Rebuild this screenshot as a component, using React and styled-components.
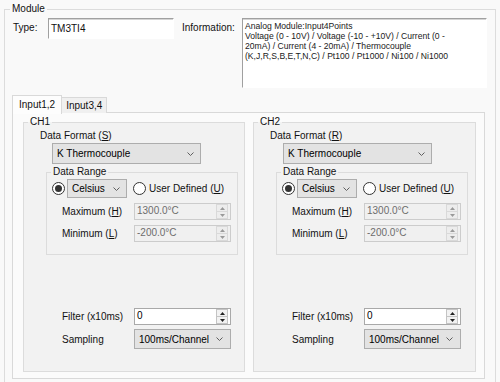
import React from 'react';
import styled, { createGlobalStyle } from 'styled-components';

const Global = createGlobalStyle`
  html, body { margin: 0; padding: 0; background: #f9f9f9; }
  body {
    font-family: "Liberation Sans", Arial, sans-serif;
    font-size: 10px;
    color: #111;
  }
  #root { width: 500px; height: 382px; overflow: hidden; }
`;

const Page = styled.div`
  box-sizing: border-box;
  width: 500px;
  height: 382px;
  padding: 3px 4px 0 4px;
  overflow: hidden;
`;

const Group = styled.fieldset`
  box-sizing: border-box;
  margin: 0;
  min-width: 0;
  padding: 0;
  border: 1px solid #dcdcdc;
  background: ${(p) => p.$bg || 'transparent'};
  height: ${(p) => p.$h}px;
  width: ${(p) => (p.$w ? `${p.$w}px` : 'auto')};
`;

const RangeGroup = styled(Group)`
  margin: 2px 0 0 22px;
`;

const Legend = styled.legend`
  padding: 0 2px;
  margin-left: ${(p) => p.$offset}px;
  line-height: 12px;
  font-size: 10px;
  color: #111;
`;

const Header = styled.div`
  display: flex;
  align-items: flex-start;
  margin: 3px 0 0 8px;
`;

const Caption = styled.span`
  width: ${(p) => p.$w}px;
  margin-left: ${(p) => p.$ml || 0}px;
  padding-top: 3px;
  line-height: 14px;
  flex: none;
`;

const TypeBox = styled.div`
  box-sizing: border-box;
  width: 126px;
  height: 21px;
  padding: 3px 0 0 2px;
  line-height: 14px;
  background: #fff;
  border: 1px solid;
  border-color: #a0a0a0 #ffffff #ffffff #a0a0a0;
  box-shadow: inset 0 1px 0 #d4d4d4;
  flex: none;
`;

const InfoBox = styled.div`
  box-sizing: border-box;
  width: 245px;
  height: 70px;
  padding: 2px 0 0 2px;
  font-size: 8.6px;
  line-height: 10px;
  color: #1a1a1a;
  background: #fff;
  border: 1px solid;
  border-color: #a0a0a0 #ffffff #ffffff #a0a0a0;
  box-shadow: inset 0 1px 0 #d4d4d4;
  flex: none;
`;

const TabStrip = styled.div`
  display: flex;
  align-items: flex-end;
  margin: 6px 0 0 7px;
  height: 19px;
`;

const Tab = styled.div`
  box-sizing: border-box;
  position: relative;
  z-index: ${(p) => (p.$active ? 2 : 1)};
  height: ${(p) => (p.$active ? 19 : 16)}px;
  margin-bottom: ${(p) => (p.$active ? -1 : 0)}px;
  margin-left: ${(p) => (p.$active ? 0 : -1)}px;
  padding: ${(p) => (p.$active ? '2px 6px 0 6px' : '1px 4px 0 4px')};
  line-height: 13px;
  background: ${(p) => (p.$active ? '#fdfdfd' : '#f0f0f0')};
  border: 1px solid #d9d9d9;
  border-bottom: none;
`;

const TabPanel = styled.div`
  box-sizing: border-box;
  width: 473px;
  height: 267px;
  margin: -1px 0 0 7px;
  padding: 3px 8px 0 10px;
  background: #fbfbfb;
  border: 1px solid #d9d9d9;
  display: grid;
  grid-template-columns: 222px 223px;
  column-gap: 8px;
  align-items: start;
`;

const FormatLabel = styled.div`
  margin: 1px 0 0 16px;
  line-height: 14px;
`;

const ComboBox = styled.div`
  box-sizing: border-box;
  display: flex;
  align-items: center;
  justify-content: space-between;
  width: ${(p) => p.$w}px;
  height: ${(p) => p.$h}px;
  margin-left: ${(p) => p.$ml || 0}px;
  padding: 0 ${(p) => p.$pr || 6}px 0 4px;
  background: #e3e3e3;
  border: 1px solid #adadad;
  color: #000;
  flex: none;
`;

const RadioRow = styled.div`
  display: flex;
  align-items: center;
  height: 19px;
  margin: 1px 0 0 5px;
`;

const Radio = styled.span`
  box-sizing: border-box;
  flex: none;
  width: 13px;
  height: 13px;
  border-radius: 50%;
  border: 1px solid #333;
  background: #fff;
  display: flex;
  align-items: center;
  justify-content: center;
  margin: 0 ${(p) => p.$mr}px 0 ${(p) => p.$ml || 0}px;
  &::after {
    content: '';
    width: 7px;
    height: 7px;
    border-radius: 50%;
    background: ${(p) => (p.$checked ? '#333' : 'transparent')};
  }
`;

const FieldRow = styled.div`
  display: flex;
  align-items: center;
  margin: ${(p) => p.$mt}px 0 0 ${(p) => p.$ml}px;
`;

const FieldLabel = styled.span`
  width: 72px;
  flex: none;
`;

const SpinBox = styled.div`
  box-sizing: border-box;
  display: flex;
  width: 97px;
  height: 17px;
  border: 1px solid ${(p) => (p.$disabled ? '#cccccc' : '#a9a9a9')};
  background: ${(p) => (p.$disabled ? '#f0f0f0' : '#ffffff')};
  color: ${(p) => (p.$disabled ? '#6d6d6d' : '#000')};
`;

const SpinValue = styled.span`
  flex: 1;
  padding-left: 2px;
  line-height: 13px;
`;

const SpinButtons = styled.div`
  display: flex;
  flex-direction: column;
  width: 12px;
  margin: 0 2px 0 0;
`;

const SpinButton = styled.div`
  flex: 1;
  display: flex;
  align-items: center;
  justify-content: center;
  background: ${(p) => (p.$disabled ? '#ededed' : '#f2f2f2')};
  border: 1px solid ${(p) => (p.$disabled ? '#d9d9d9' : '#c4c4c4')};
  & + & { border-top: none; }
`;

const Chevron = () => (
  <svg width="7" height="4" viewBox="0 0 7 4">
    <polyline points="0.5,0.5 3.5,3.5 6.5,0.5" fill="none" stroke="#5f5f5f" strokeWidth="1" />
  </svg>
);

const Arrow = ({ up, color }) => (
  <svg width="5" height="3" viewBox="0 0 5 3">
    <polygon points={up ? '0,3 5,3 2.5,0' : '0,0 5,0 2.5,3'} fill={color} />
  </svg>
);

function Spin({ value, disabled }) {
  const c = disabled ? '#9a9a9a' : '#222';
  return (
    <SpinBox $disabled={disabled}>
      <SpinValue>{value}</SpinValue>
      <SpinButtons>
        <SpinButton $disabled={disabled}><Arrow up color={c} /></SpinButton>
        <SpinButton $disabled={disabled}><Arrow color={c} /></SpinButton>
      </SpinButtons>
    </SpinBox>
  );
}

function Channel({ name, formatKey, comboOffset }) {
  return (
    <Group $bg="#f2f2f2" $h={256}>
      <Legend $offset={4}>{name}</Legend>
      <FormatLabel>Data Format (<u>{formatKey}</u>)</FormatLabel>
      <ComboBox $w={149} $h={21} $ml={comboOffset}>K Thermocouple<Chevron /></ComboBox>
      <RangeGroup $bg="#f2f2f2" $h={89} $w={192}>
        <Legend $offset={4}>Data Range</Legend>
        <RadioRow>
          <Radio $checked $mr={2} />
          <ComboBox $w={60} $h={19} $pr={6}>Celsius<Chevron /></ComboBox>
          <Radio $ml={6} $mr={3} />
          <span>User Defined (<u>U</u>)</span>
        </RadioRow>
        <FieldRow $mt={5} $ml={15}>
          <FieldLabel>Maximum (<u>H</u>)</FieldLabel>
          <Spin value="1300.0°C" disabled />
        </FieldRow>
        <FieldRow $mt={5} $ml={15}>
          <FieldLabel>Minimum (<u>L</u>)</FieldLabel>
          <Spin value="-200.0°C" disabled />
        </FieldRow>
      </RangeGroup>
      <FieldRow $mt={53} $ml={38}>
        <FieldLabel>Filter (x10ms)</FieldLabel>
        <Spin value="0" />
      </FieldRow>
      <FieldRow $mt={4} $ml={38}>
        <FieldLabel>Sampling</FieldLabel>
        <ComboBox $w={97} $h={20} $pr={7}>100ms/Channel<Chevron /></ComboBox>
      </FieldRow>
    </Group>
  );
}

export default function App() {
  return (
    <>
      <Global />
      <Page>
        <Group $h={392}>
          <Legend $offset={5}>Module</Legend>
          <Header>
            <Caption $w={35}>Type:</Caption>
            <TypeBox>TM3TI4</TypeBox>
            <Caption $w={60} $ml={8}>Information:</Caption>
            <InfoBox>
              Analog Module:Input4Points<br />
              Voltage (0 - 10V) / Voltage (-10 - +10V) / Current (0 -<br />
              20mA) / Current (4 - 20mA) / Thermocouple<br />
              (K,J,R,S,B,E,T,N,C) / Pt100 / Pt1000 / Ni100 / Ni1000
            </InfoBox>
          </Header>
          <TabStrip>
            <Tab $active>Input1,2</Tab>
            <Tab>Input3,4</Tab>
          </TabStrip>
          <TabPanel>
            <Channel name="CH1" formatKey="S" comboOffset={28} />
            <Channel name="CH2" formatKey="R" comboOffset={29} />
          </TabPanel>
        </Group>
      </Page>
    </>
  );
}
